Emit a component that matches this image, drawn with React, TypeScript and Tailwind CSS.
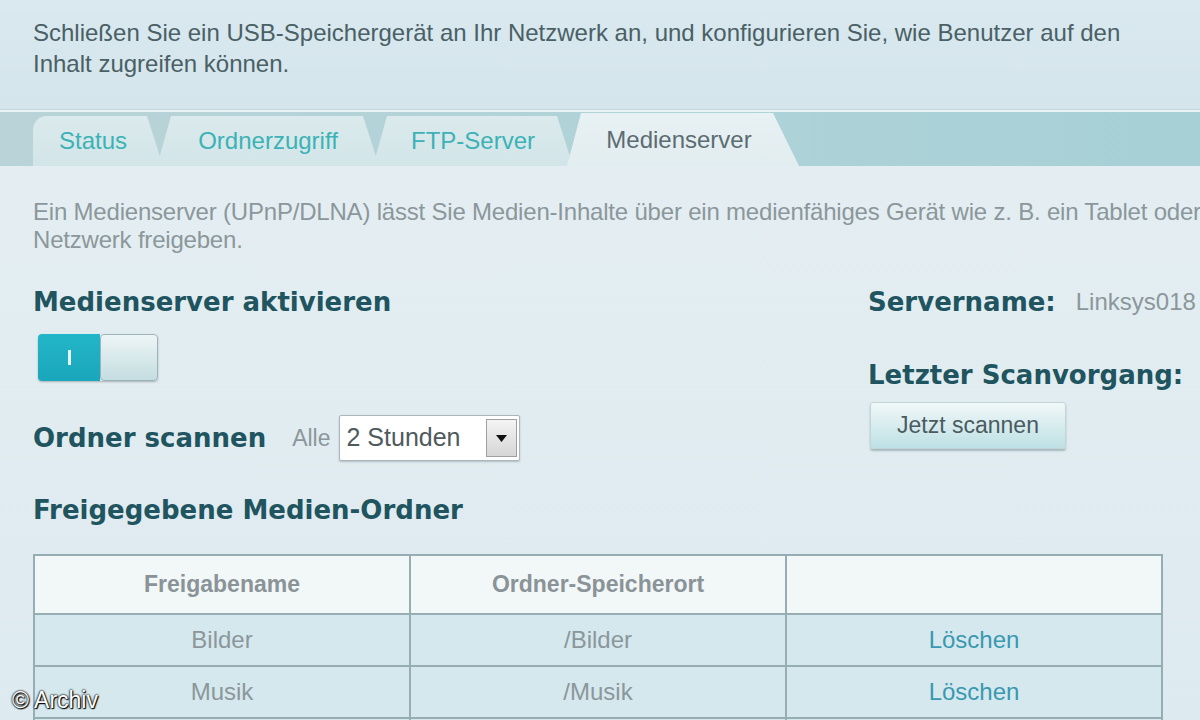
import React from "react";

const sans = "font-['Liberation_Sans',Arial,sans-serif]";
const heading = "font-['DejaVu_Sans',Verdana,sans-serif] font-bold text-[26px] leading-[30px] text-[#20545f]";

const tabs = [
    { label: "Status", w: "w-[130px]" },
    { label: "Ordnerzugriff", w: "w-[222px]" },
    { label: "FTP-Server", w: "w-[200px]" },
];

function Tabs() {
    return (
        <div className="h-[56px] bg-gradient-to-r from-[#b9d3d8] via-[#b0d3d8] to-[#a6d0d6] border-t-2 border-[#e9f2f5] flex items-end pl-[33px]">
            {tabs.map((t, i) => (
                <div
                    key={t.label}
                    className={`${t.w} h-[50px] flex items-center justify-center text-[24px] text-[#3cb2b7] bg-gradient-to-b from-[#dbeaec] to-[#d2e5e8] rounded-tl-[14px] ${i === 0 ? "[clip-path:polygon(0_0,calc(100%-16px)_0,100%_100%,0_100%)] pr-[10px]" : "-ml-[6px] [clip-path:polygon(14px_0,calc(100%-16px)_0,100%_100%,0_100%)]"}`}
                >
                    {t.label}
                </div>
            ))}
            <div className="w-[232px] h-[53px] -ml-[6px] flex items-center justify-center pr-[8px] text-[24px] text-[#5b6c72] bg-gradient-to-b from-[#e8f1f3] to-[#e2edf0] [clip-path:polygon(14px_0,calc(100%-26px)_0,100%_100%,0_100%)]">
                Medienserver
            </div>
        </div>
    );
}

function Toggle() {
    return (
        <div className="mt-[17px] ml-[5px] w-[120px] h-[47px] flex rounded-[4px] overflow-hidden shadow-[0_1px_2px_rgba(0,0,0,0.25)]">
            <div className="w-[62px] bg-gradient-to-b from-[#23b6c9] to-[#1aa6bb] flex items-center justify-center">
                <div className="w-[3px] h-[15px] bg-white/90" />
            </div>
            <div className="flex-1 bg-gradient-to-b from-[#edf5f6] to-[#c4dde1] border border-[#9db4ba] rounded-[4px]" />
        </div>
    );
}

function Select() {
    return (
        <div className="w-[181px] h-[46px] bg-white border border-[#a9b6ba] rounded-[2px] shadow-[0_1px_2px_rgba(0,0,0,0.2)] flex items-center">
            <span className="flex-1 pl-[7px] text-[25px] text-[#4f5a5e]">2 Stunden</span>
            <div className="w-[31px] h-[38px] mr-[2px] bg-gradient-to-b from-[#f4f4f4] to-[#d6d6d6] border border-[#a0a0a0] flex items-center justify-center">
                <svg width="11" height="7" viewBox="0 0 11 7">
                    <path d="M0 0h11L5.5 7z" fill="#111" />
                </svg>
            </div>
        </div>
    );
}

const rows = [
    { name: "Bilder", path: "/Bilder" },
    { name: "Musik", path: "/Musik" },
];

const cell = "border-2 border-[#95adb3] text-center";

export default function App() {
    return (
        <div className={`${sans} relative w-[1200px] h-[720px] overflow-hidden bg-gradient-to-b from-[#d8e8ee] to-[#dbe9ef]`}>
            {/* intro */}
            <div className="h-[110px] pt-[17px] pl-[33px] text-[24px] leading-[31px] text-[#4a6065] bg-gradient-to-b from-[#d9e9ef] to-[#d4e5eb] border-b border-[#c4d9df]">
                <div className="whitespace-nowrap">Schließen Sie ein USB-Speichergerät an Ihr Netzwerk an, und konfigurieren Sie, wie Benutzer auf den</div>
                <div>Inhalt zugreifen können.</div>
            </div>

            <Tabs />

            <div className="bg-gradient-to-b from-[#e4eef2] to-[#dbe9ef] h-full pl-[33px]">
                <div className="pt-[32px] text-[24px] leading-[28px] text-[#8b979b] tracking-[-0.2px]">
                    <div className="whitespace-nowrap">Ein Medienserver (UPnP/DLNA) lässt Sie Medien-Inhalte über ein medienfähiges Gerät wie z. B. ein Tablet oder</div>
                    <div>Netzwerk freigeben.</div>
                </div>

                <div className="mt-[33px] grid grid-cols-[835px_1fr]">
                    <div>
                        <h2 className={heading}>Medienserver aktivieren</h2>
                        <Toggle />
                        <div className="mt-[34px] flex items-center">
                            <h2 className={heading}>Ordner scannen</h2>
                            <span className="ml-[26px] text-[23px] text-[#8b979b]">Alle</span>
                            <div className="ml-[8px]">
                                <Select />
                            </div>
                        </div>
                    </div>
                    <div>
                        <div className="h-[30px] flex items-center whitespace-nowrap">
                            <h2 className={heading}>Servername:</h2>
                            <span className="ml-[20px] text-[24px] text-[#8b979b]">Linksys018</span>
                        </div>
                        <h2 className={`${heading} mt-[43px]`}>Letzter Scanvorgang:</h2>
                        <button className="mt-[12px] ml-[2px] w-[196px] h-[47px] rounded-[3px] bg-gradient-to-b from-[#f1f8f9] to-[#bde0e4] border border-[#c2d6da] shadow-[0_2px_2px_rgba(60,90,100,0.35)] text-[23px] text-[#4b5b60]">
                            Jetzt scannen
                        </button>
                    </div>
                </div>

                <h2 className={`${heading} mt-[34px]`}>Freigegebene Medien-Ordner</h2>

                <table className="mt-[29px] w-[1130px] border-collapse border-2 border-[#95adb3] text-[24px] text-[#8c979b] table-fixed">
                    <thead>
                        <tr className="h-[59px] bg-[#f2f7f8]">
                            <th className={`${cell} text-[23px] font-bold text-[#8a9397]`}>Freigabename</th>
                            <th className={`${cell} text-[23px] font-bold text-[#8a9397]`}>Ordner-Speicherort</th>
                            <th className={cell}></th>
                        </tr>
                    </thead>
                    <tbody>
                        {rows.map((r) => (
                            <tr key={r.name} className="h-[52px] bg-[#d5e8ee]">
                                <td className={cell}>{r.name}</td>
                                <td className={cell}>{r.path}</td>
                                <td className={`${cell} text-[#3a98b1]`}>Löschen</td>
                            </tr>
                        ))}
                        <tr className="h-[52px] bg-[#d5e8ee]">
                            <td className={cell}></td>
                            <td className={cell}></td>
                            <td className={cell}></td>
                        </tr>
                    </tbody>
                </table>
            </div>

            {/* watermark */}
            <div className="absolute left-[12px] top-[683px] text-[23px] text-white [text-shadow:0_0_2px_#000,0_0_2px_#000,1px_1px_1px_#000]">
                © Archiv
            </div>
        </div>
    );
}
